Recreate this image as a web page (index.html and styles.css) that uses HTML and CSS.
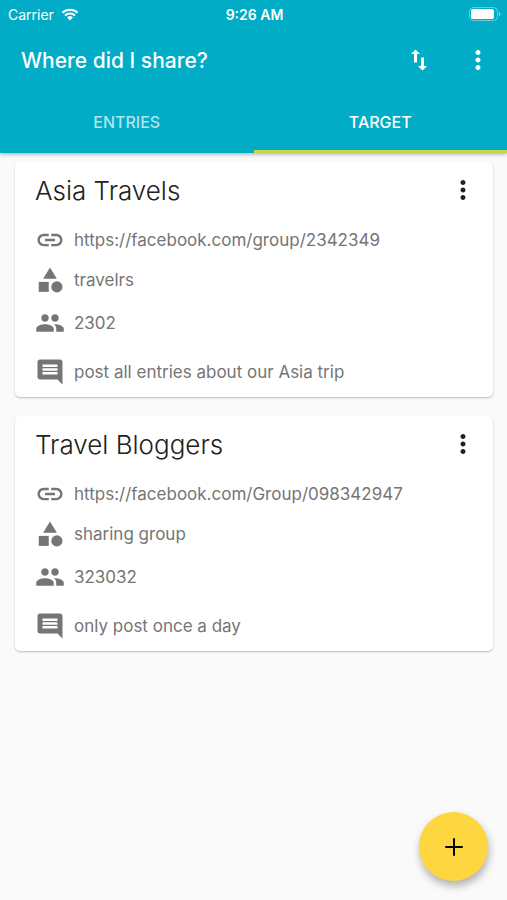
FILE: index.html
```html
<!DOCTYPE html>
<html lang="en">
<head>
    <meta charset="UTF-8">
    <meta name="viewport" content="width=device-width, initial-scale=1.0">
    <title>Where did I share?</title>
    <link rel="stylesheet" href="styles.css">
</head>
<body>
    <!-- shared icon shapes -->
    <svg class="sprite" aria-hidden="true">
        <symbol id="more" viewBox="0 0 24 24"><path d="M12 8c1.1 0 2-.9 2-2s-.9-2-2-2-2 .9-2 2 .9 2 2 2zm0 2c-1.1 0-2 .9-2 2s.9 2 2 2 2-.9 2-2-.9-2-2-2zm0 6c-1.1 0-2 .9-2 2s.9 2 2 2 2-.9 2-2-.9-2-2-2z"/></symbol>
        <symbol id="link" viewBox="0 0 24 24"><path d="M3.900 12c0-1.710 1.390-3.100 3.100-3.100h4V7H7c-2.760 0-5 2.240-5 5s2.240 5 5 5h4v-1.900H7c-1.710 0-3.100-1.390-3.100-3.100zM8 13h8v-2H8v2zm9-6h-4v1.900h4c1.710 0 3.100 1.390 3.100 3.100s-1.390 3.100-3.100 3.100h-4V17h4c2.760 0 5-2.240 5-5s-2.240-5-5-5z"/></symbol>
        <symbol id="category" viewBox="0 0 24 24"><path d="M12 2l-5.500 9h11z"/><circle cx="17.500" cy="17.500" r="4.500"/><path d="M3 13.500h8v8H3z"/></symbol>
        <symbol id="people" viewBox="0 0 24 24"><path d="M16 11c1.660 0 2.990-1.340 2.990-3S17.660 5 16 5s-3 1.340-3 3 1.340 3 3 3zm-8 0c1.660 0 2.990-1.340 2.990-3S9.660 5 8 5 5 6.340 5 8s1.340 3 3 3zm0 2c-2.330 0-7 1.170-7 3.500V19h14v-2.500c0-2.330-4.670-3.500-7-3.500zm8 0c-.29 0-.62.020-.97.050 1.160.84 1.970 1.970 1.970 3.450V19h6v-2.500c0-2.330-4.670-3.500-7-3.500z"/></symbol>
        <symbol id="comment" viewBox="0 0 24 24"><path d="M21.990 4c0-1.100-.89-2-1.990-2H4c-1.100 0-2 .9-2 2v12c0 1.100.9 2 2 2h14l4 4-.01-18zM18 14H6v-2h12v2zm0-3H6V9h12v2zm0-3H6V6h12v2z"/></symbol>
    </svg>

    <header class="header">
        <div class="status">
            <div class="carrier">
                <span>Carrier</span>
                <svg class="wifi" viewBox="0 0 18 13">
                    <path d="M1.400 4.700a11 11 0 0 1 15.200 0M4 7.500a7.200 7.200 0 0 1 10 0"/>
                    <path class="wifi-dot" d="M9 12.500l-2.900-3a4.200 4.200 0 0 1 5.800 0z"/>
                </svg>
            </div>
            <div class="time">9:26 AM</div>
            <svg class="battery" viewBox="0 0 32 14">
                <rect class="battery-case" x=".5" y=".5" width="28" height="13" rx="4"/>
                <rect x="2" y="2" width="23" height="10" rx="2"/>
                <path class="battery-tip" d="M30 5v4c2-.5 2-3.500 0-4z"/>
            </svg>
        </div>
        <div class="toolbar">
            <h1>Where did I share?</h1>
            <button class="icon-btn" aria-label="Sort">
                <svg class="icon" viewBox="0 0 30 30"><path d="M11.500 4.500L7 9h3v8.500h3V9h3zM20 21v-8.500h-3V21h-3l4.500 4.500L23 21z"/></svg>
            </button>
            <button class="icon-btn" aria-label="Menu"><svg class="icon"><use href="#more"/></svg></button>
        </div>
        <nav class="tabs">
            <a href="#entries">ENTRIES</a>
            <a href="#target" class="active">TARGET</a>
        </nav>
    </header>

    <main class="list" id="target">
        <article class="card">
            <div class="card-head">
                <h2>Asia Travels</h2>
                <button class="icon-btn" aria-label="Asia Travels options"><svg class="icon"><use href="#more"/></svg></button>
            </div>
            <ul class="details">
                <li><svg class="icon"><use href="#link"/></svg><a href="https://facebook.com/group/2342349">https://facebook.com/group/2342349</a></li>
                <li class="category"><svg class="icon"><use href="#category"/></svg><span>travelrs</span></li>
                <li class="members"><svg class="icon"><use href="#people"/></svg><span>2302</span></li>
                <li class="note"><svg class="icon"><use href="#comment"/></svg><span>post all entries about our Asia trip</span></li>
            </ul>
        </article>
        <article class="card">
            <div class="card-head">
                <h2>Travel Bloggers</h2>
                <button class="icon-btn" aria-label="Travel Bloggers options"><svg class="icon"><use href="#more"/></svg></button>
            </div>
            <ul class="details">
                <li><svg class="icon"><use href="#link"/></svg><a href="https://facebook.com/Group/098342947">https://facebook.com/Group/098342947</a></li>
                <li class="category"><svg class="icon"><use href="#category"/></svg><span>sharing group</span></li>
                <li class="members"><svg class="icon"><use href="#people"/></svg><span>323032</span></li>
                <li class="note"><svg class="icon"><use href="#comment"/></svg><span>only post once a day</span></li>
            </ul>
        </article>
    </main>

    <button class="fab" aria-label="Add target">
        <svg class="icon" viewBox="0 0 24 24"><path d="M19 12.800h-6.200v6.200h-1.600v-6.200H5v-1.600h6.200V5h1.600v6.200H19z"/></svg>
    </button>
</body>
</html>
```
FILE: styles.css
```css
*{
    margin:0;
    padding:0;
    box-sizing:border-box;
}
body{
    min-height:100vh;
    background:#fafafa;
    color:#212121;
    font-family:Inter, "Liberation Sans", sans-serif;
}
a{
    color:inherit;
    text-decoration:none;
}
button{
    border:0;
    background:none;
    color:inherit;
    cursor:pointer;
}
.sprite{
    display:none;
}
.icon{
    display:block;
    flex:none;
    width:30px;
    height:30px;
    fill:currentColor;
}
.icon-btn{
    padding:0 9px;
}

/* header */
.header{
    background:#00acc6;
    color:#fff;
    box-shadow:0 1px 4px rgba(0,0,0,.35);
}
.status{
    display:grid;
    grid-template-columns:1fr auto 1fr;
    align-items:center;
    height:28px;
    padding:0 6px 0 8px;
    font-size:14px;
}
.carrier{
    display:flex;
    align-items:center;
    gap:7px;
}
.wifi{
    width:18px;
    height:13px;
    fill:none;
    stroke:#fff;
    stroke-width:2;
}
.wifi-dot{
    fill:#fff;
    stroke:none;
}
.time{
    font-weight:600;
}
.battery{
    justify-self:end;
    width:32px;
    height:14px;
    fill:#fff;
}
.battery-case{
    fill:none;
    stroke:#fff;
    opacity:.4;
}
.battery-tip{
    opacity:.5;
}
.toolbar{
    display:flex;
    align-items:center;
    gap:11px;
    height:64px;
    padding:0 5px 0 21px;
}
.toolbar h1{
    flex:1;
    font-size:21px;
    font-weight:500;
}
.tabs{
    display:flex;
    height:61px;
}
.tabs a{
    flex:1;
    border-bottom:3px solid transparent;
    line-height:60px;
    text-align:center;
    font-size:16px;
    font-weight:500;
    color:rgba(255,255,255,.7);
}
.tabs .active{
    border-color:#c6d84e;
    color:#fff;
}

/* cards */
.list{
    display:flex;
    flex-direction:column;
    gap:19px;
    padding:9px 14px 9px 15px;
}
.card{
    padding:9px 6px 10px 20px;
    border-radius:5px;
    background:#fff;
    box-shadow:0 1px 2px rgba(0,0,0,.25);
}
.card-head{
    display:flex;
    align-items:center;
    justify-content:space-between;
    height:38px;
    margin-bottom:16px;
}
.card h2{
    font-size:26px;
    font-weight:300;
}
.details{
    list-style:none;
    color:#757575;
    font-size:17px;
}
.details li{
    display:flex;
    align-items:center;
    gap:9px;
}
.details .category{
    margin-top:10px;
}
.details .members{
    margin-top:13px;
}
.details .note{
    margin-top:19px;
}

/* add button */
.fab{
    position:fixed;
    right:19px;
    bottom:19px;
    display:flex;
    align-items:center;
    justify-content:center;
    width:69px;
    height:69px;
    border-radius:50%;
    background:#fed63f;
    color:#000;
    box-shadow:1px 5px 9px rgba(0,0,0,.3);
}
```
